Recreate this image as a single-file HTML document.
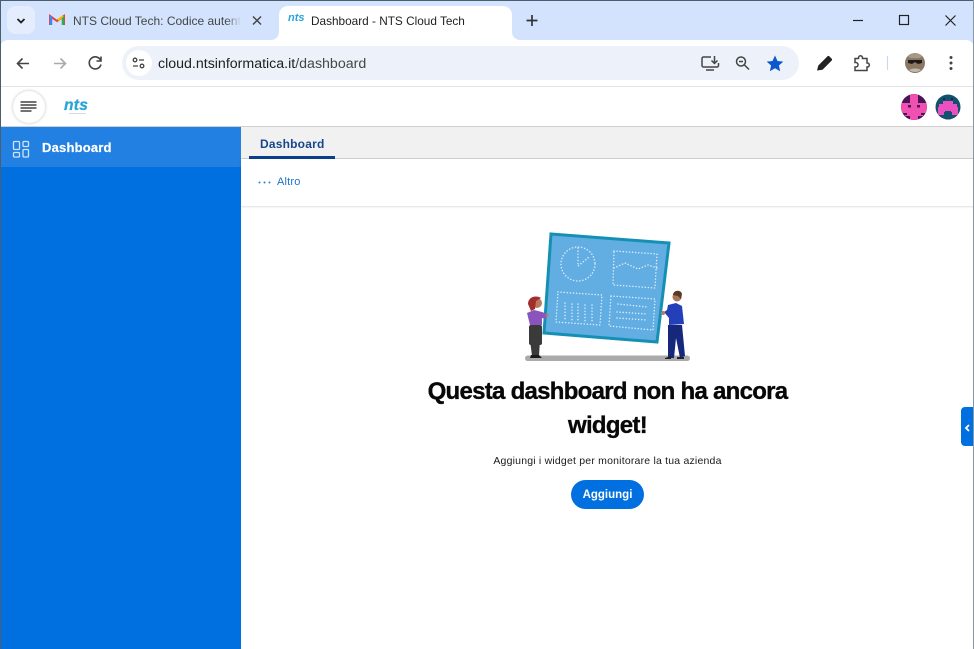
<!DOCTYPE html>
<html><head><meta charset="utf-8"><style>
*{box-sizing:border-box;margin:0;padding:0}
html,body{width:974px;height:649px;overflow:hidden;background:#fff;font-family:"Liberation Sans",sans-serif}
.a{position:absolute;white-space:nowrap}
svg{position:absolute;overflow:visible}
</style></head><body>
<!-- tab strip -->
<div class="a" style="left:0;top:0;width:974px;height:48px;background:#d3e3fd"></div>
<div class="a" style="left:0;top:0;width:974px;height:1px;background:#4a5f6e"></div>
<div class="a" style="left:7px;top:6px;width:28px;height:28px;border-radius:8px;background:#e3edfd"></div>
<svg style="left:0;top:0" width="974" height="130">
<path d="M17.500 19l3.500 3.500 3.500-3.500" fill="none" stroke="#1f1f1f" stroke-width="1.800"/>
<path d="M50 25V16l7 5 7-5v9" fill="none" stroke="#ea4335" stroke-width="2"/>
<path d="M51 16v9" stroke="#4285f4" stroke-width="2.500"/><path d="M63 16v9" stroke="#34a853" stroke-width="2.500"/>
<path d="M58 20l5-4" stroke="#fbbc04" stroke-width="2"/>
<path d="M253 16.500l8 8m0-8l-8 8" stroke="#444" stroke-width="1.500"/>
<path d="M491 16.500l8 8m0-8l-8 8" stroke="#222" stroke-width="1.500"/>
<path d="M532 15v11M526.500 20.500h11" stroke="#333" stroke-width="1.700"/>
<path d="M853 20.500h10" stroke="#222" stroke-width="1.200"/>
<rect x="899.500" y="15.500" width="9" height="9" fill="none" stroke="#222" stroke-width="1.200"/>
<path d="M945.500 15.500l10 10m0-10l-10 10" stroke="#222" stroke-width="1.200"/>
</svg>
<div class="a" style="left:73px;top:14px;width:167px;overflow:hidden;font-size:12px;line-height:15px;color:#444746">NTS Cloud Tech: Codice autenticazione</div>
<div class="a" style="left:226px;top:12px;width:15px;height:18px;background:linear-gradient(90deg,rgba(211,227,253,0),#d3e3fd)"></div>
<!-- active tab -->
<div class="a" style="left:279px;top:6px;width:233px;height:36px;background:#fff;border-radius:9px 9px 0 0"></div>
<div class="a" style="left:271px;top:32px;width:8px;height:8px;background:#fff"></div>
<div class="a" style="left:271px;top:32px;width:8px;height:8px;background:#d3e3fd;border-radius:0 0 8px 0"></div>
<div class="a" style="left:512px;top:32px;width:8px;height:8px;background:#fff"></div>
<div class="a" style="left:512px;top:32px;width:8px;height:8px;background:#d3e3fd;border-radius:0 0 0 8px"></div>
<div class="a" style="left:288px;top:12px;font:italic bold 11px/13px 'Liberation Sans',sans-serif;color:#2aa5d6">nts</div>
<div class="a" style="left:311px;top:14px;font-size:11.800px;line-height:15px;color:#1f1f1f">Dashboard - NTS Cloud Tech</div>
<!-- toolbar -->
<div class="a" style="left:0;top:40px;width:974px;height:47px;background:#fff;border-bottom:1px solid #e3e3e3;border-radius:8px 8px 0 0"></div>
<div class="a" style="left:122px;top:46px;width:677px;height:34px;border-radius:17px;background:#edf2fa"></div>
<div class="a" style="left:126px;top:50px;width:26px;height:26px;border-radius:13px;background:#fff"></div>
<div class="a" style="left:158px;top:55px;font-size:14.200px;line-height:18px;color:#1f1f1f">cloud.ntsinformatica.it<span style="color:#444746">/dashboard</span></div>
<svg style="left:0;top:0" width="974" height="130">
<path d="M29 63.500H18M22.500 58.500l-5 5 5 5" fill="none" stroke="#444" stroke-width="1.600"/>
<path d="M54 63.500H65M60.500 58.500l5 5-5 5" fill="none" stroke="#aaa" stroke-width="1.600"/>
<path d="M100.500 60a6 6 0 1 0 .5 4.500M101 56.500v4.500h-4.500" fill="none" stroke="#444" stroke-width="1.600"/>
<g fill="none" stroke="#444" stroke-width="1.300"><circle cx="135" cy="60" r="1.800"/><path d="M139 60h5M133 66h5"/><circle cx="142" cy="66" r="1.800"/></g>
<path d="M711 57h-7.500a1.500 1.500 0 0 0-1.500 1.500v7a1.500 1.500 0 0 0 1.500 1.500h13.500a1.500 1.500 0 0 0 1.500-1.500V63M706 70h8M714.500 56v7M711.500 60.500l3 3 3-3" fill="none" stroke="#444" stroke-width="1.500"/>
<circle cx="741" cy="61.500" r="4.500" fill="none" stroke="#444" stroke-width="1.500"/><path d="M739 61.500h4M744.500 65l4.500 4.500" stroke="#444" stroke-width="1.500"/>
<path d="M775 55.500l2.500 5.500 5.800.6-4.400 3.900 1.300 5.700-5.200-3-5.200 3 1.300-5.700-4.400-3.900 5.800-.6z" fill="#0b57d0"/>
<path d="M817 70.500l1.300-5 9-9a1.500 1.500 0 0 1 2.200 0l2 2a1.500 1.500 0 0 1 0 2.200l-9 9z" fill="#222"/>
<path d="M855 58.500h3.500v-.7a2 2 0 0 1 4 0v.7H867v4.500h.3a2 2 0 0 1 0 4H867v3.500h-12V67h.8a2.200 2.200 0 0 0 0-4.500H855z" fill="none" stroke="#444" stroke-width="1.500"/>
<path d="M887.500 56v14" stroke="#c9d8ea" stroke-width="1.200"/>
<circle cx="915" cy="63" r="10" fill="#8b7864"/><path d="M908 60h14v3l-4 1-3-2-3 2-4-1z" fill="#1d1a18"/><path d="M909 70c3-2 9-2 12 0a10 10 0 0 1-12 0z" fill="#c0b8ad"/><path d="M908 56a10 10 0 0 1 14 0l-2 2h-10z" fill="#a89a88"/>
<g fill="#444"><circle cx="951" cy="57.500" r="1.500"/><circle cx="951" cy="63" r="1.500"/><circle cx="951" cy="68.500" r="1.500"/></g>
</svg>
<!-- app header -->
<div class="a" style="left:0;top:87px;width:974px;height:40px;background:#fff;border-bottom:1px solid #d0d0d0"></div>
<div class="a" style="left:13px;top:91px;width:32px;height:32px;border-radius:16px;background:#fff;box-shadow:0 0 3px rgba(0,0,0,.25)"></div>
<svg style="left:0;top:0" width="974" height="130">
<path d="M20.500 102h16M20.500 105h16M20.500 108h16M20.500 111h11" stroke="#444" stroke-width="1.500"/>
<clipPath id="c1"><circle cx="914" cy="107" r="13"/></clipPath>
<clipPath id="c2"><circle cx="948" cy="107" r="12.500"/></clipPath>
<circle cx="914" cy="107" r="13" fill="#4a1458"/>
<g clip-path="url(#c1)">
<path d="M910 94h8v9h9v10h-4v3h-5v4h-8v-4h-5v-3h-4v-10h9z" fill="#f050b0"/>
<rect x="908" y="105" width="3" height="2.500" fill="#4a1458"/><rect x="917" y="105" width="3" height="2.500" fill="#4a1458"/>
<rect x="904" y="113" width="3" height="2" fill="#4a1458"/><rect x="921" y="113" width="3" height="2" fill="#4a1458"/>
</g>
<circle cx="948" cy="107" r="12.500" fill="#12526e"/>
<g clip-path="url(#c2)">
<path d="M943 101h10v3h4v3h1v8h-6v-3h-8v3h-6v-8h1v-3h4z" fill="#ec4fc0"/>
<rect x="945" y="111" width="6" height="9" fill="#12526e"/>
<rect x="943" y="98" width="2" height="2" fill="#0a2f40"/><rect x="951" y="98" width="2" height="2" fill="#0a2f40"/>
</g>
</svg>
<div class="a" style="left:64px;top:97px;font:italic bold 15.500px/17px 'Liberation Sans',sans-serif;color:#2aa5d6;letter-spacing:.3px;-webkit-text-stroke:.3px #2aa5d6">nts</div>
<div class="a" style="left:69px;top:113px;width:17px;height:1px;background:#d4dbe0"></div>
<!-- sidebar -->
<div class="a" style="left:0;top:127px;width:241px;height:522px;background:#006fdf"></div>
<div class="a" style="left:1px;top:127px;width:240px;height:40px;background:#2280e2"></div>
<svg style="left:0;top:0" width="60" height="170" fill="none" stroke="#cfe3f8" stroke-width="1.300">
<rect x="13.500" y="141.500" width="6" height="8" rx="1"/><rect x="23" y="141.500" width="5.500" height="5" rx="1"/><rect x="13.500" y="152.500" width="6" height="4.500" rx="1"/><rect x="23" y="149.500" width="5.500" height="7.500" rx="1"/>
</svg>
<div class="a" style="left:42px;top:140px;font-size:13px;line-height:16px;font-weight:bold;color:#fff;letter-spacing:.2px;-webkit-text-stroke:.2px #fff">Dashboard</div>
<!-- tabs -->
<div class="a" style="left:241px;top:127px;width:733px;height:32px;background:#f1f1f1;border-bottom:1px solid #cfcfcf"></div>
<div class="a" style="left:260px;top:137px;font-size:12px;line-height:15px;font-weight:bold;color:#17468c;letter-spacing:.2px">Dashboard</div>
<div class="a" style="left:249px;top:156px;width:86px;height:3px;background:#0a3f8a"></div>
<!-- toolbar 2 -->
<div class="a" style="left:241px;top:159px;width:733px;height:47px;background:#fff;box-shadow:0 1px 2px rgba(0,0,0,.13)"></div>
<svg style="left:258px;top:176px" width="13" height="12"><g fill="#2a7fd6"><circle cx="1.500" cy="6.500" r="1"/><circle cx="6.500" cy="6.500" r="1"/><circle cx="11.500" cy="6.500" r="1"/></g></svg>
<div class="a" style="left:277px;top:175px;font-size:11px;line-height:14px;color:#1a73d0;letter-spacing:.2px">Altro</div>
<!-- illustration -->
<svg style="left:510px;top:225px" width="190" height="145">
<rect x="15" y="130.500" width="165" height="5.500" rx="2.700" fill="#aaaaaa"/>
<path d="M41 9L159 18 147 117 34 108z" fill="#62ade2" stroke="#1490b4" stroke-width="3"/>
<g fill="none" stroke="#d7ecfa" stroke-width="1.500" stroke-linecap="round" stroke-dasharray="0.100 3">
<circle cx="68" cy="39" r="17"/><path d="M68 23v18l11-9"/>
<path d="M104 26l43 3-2 34-42-3z"/><path d="M104 43l11-5 13 6 10-4 9 3"/>
<path d="M48 67l44 3-2 30-44-3z"/><path d="M55 78v16M62 79v16M68 79v16M75 80v16M82 80v16"/>
<path d="M101 71l44 3-2 31-44-4z"/><path d="M108 79l29 3M107 87l30 2M107 93l30 2"/>
</g>
<!-- woman -->
<rect x="19" y="100" width="13" height="20" rx="2" fill="#3a3a3a"/>
<path d="M20 115h10l-1 16h-7z" fill="#3a3a3a"/><path d="M21 130h8l3 3H20z" fill="#1c1c1c"/>
<path d="M17 88l7-3 8 2 5 2-1 5-4-1v7H20z" fill="#8a54bd"/>
<circle cx="37" cy="90.500" r="1.500" fill="#b97a60"/>
<circle cx="27" cy="78" r="5" fill="#b97a60"/><path d="M18 79c0-8 9-9 13-6l-5 3-1 8-4 2z" fill="#a12d2d"/>
<!-- man -->
<path d="M158 100h14l3 31-5 2-4-20-2 20h-6z" fill="#15287c"/>
<path d="M158 80l8-2 6 3 2 18-15 1v-7l-5-6 3-2z" fill="#2440b8"/>
<circle cx="153" cy="88" r="2" fill="#b97a60"/>
<circle cx="167" cy="72" r="4.500" fill="#a8765a"/><path d="M163 70c0-5 8-6 9-1l-1 5-3-3z" fill="#5a3a22"/>
<path d="M155 133l6-2v3h-6zM167 132h7v2h-7z" fill="#222"/>
</svg>
<!-- empty state -->
<div class="a" style="left:241px;top:375px;width:733px;text-align:center;font-size:24px;line-height:34px;font-weight:bold;color:#080808;letter-spacing:-.72px;-webkit-text-stroke:.35px #080808">Questa dashboard non ha ancora<br>widget!</div>
<div class="a" style="left:241px;top:454px;width:733px;text-align:center;font-size:10.500px;line-height:14px;color:#1a1a1a;letter-spacing:.2px">Aggiungi i widget per monitorare la tua azienda</div>
<div class="a" style="left:571px;top:480px;width:73px;height:29px;border-radius:15px;background:#006fdf;color:#fff;text-align:center;font-size:11.500px;line-height:30px;font-weight:bold">Aggiungi</div>
<!-- side handle -->
<div class="a" style="left:961px;top:407px;width:13px;height:39px;background:#006fdf;border-radius:4px 0 0 4px"></div>
<svg style="left:0;top:0" width="974" height="649"><path d="M969 425l-3 3 3 3" fill="none" stroke="#fff" stroke-width="1.800"/></svg>
<!-- window edge -->
<div class="a" style="left:0;top:0;width:1px;height:649px;background:#4a5f6e"></div>
<div class="a" style="left:973px;top:0;width:1px;height:649px;background:#8a98a3"></div>
</body></html>
